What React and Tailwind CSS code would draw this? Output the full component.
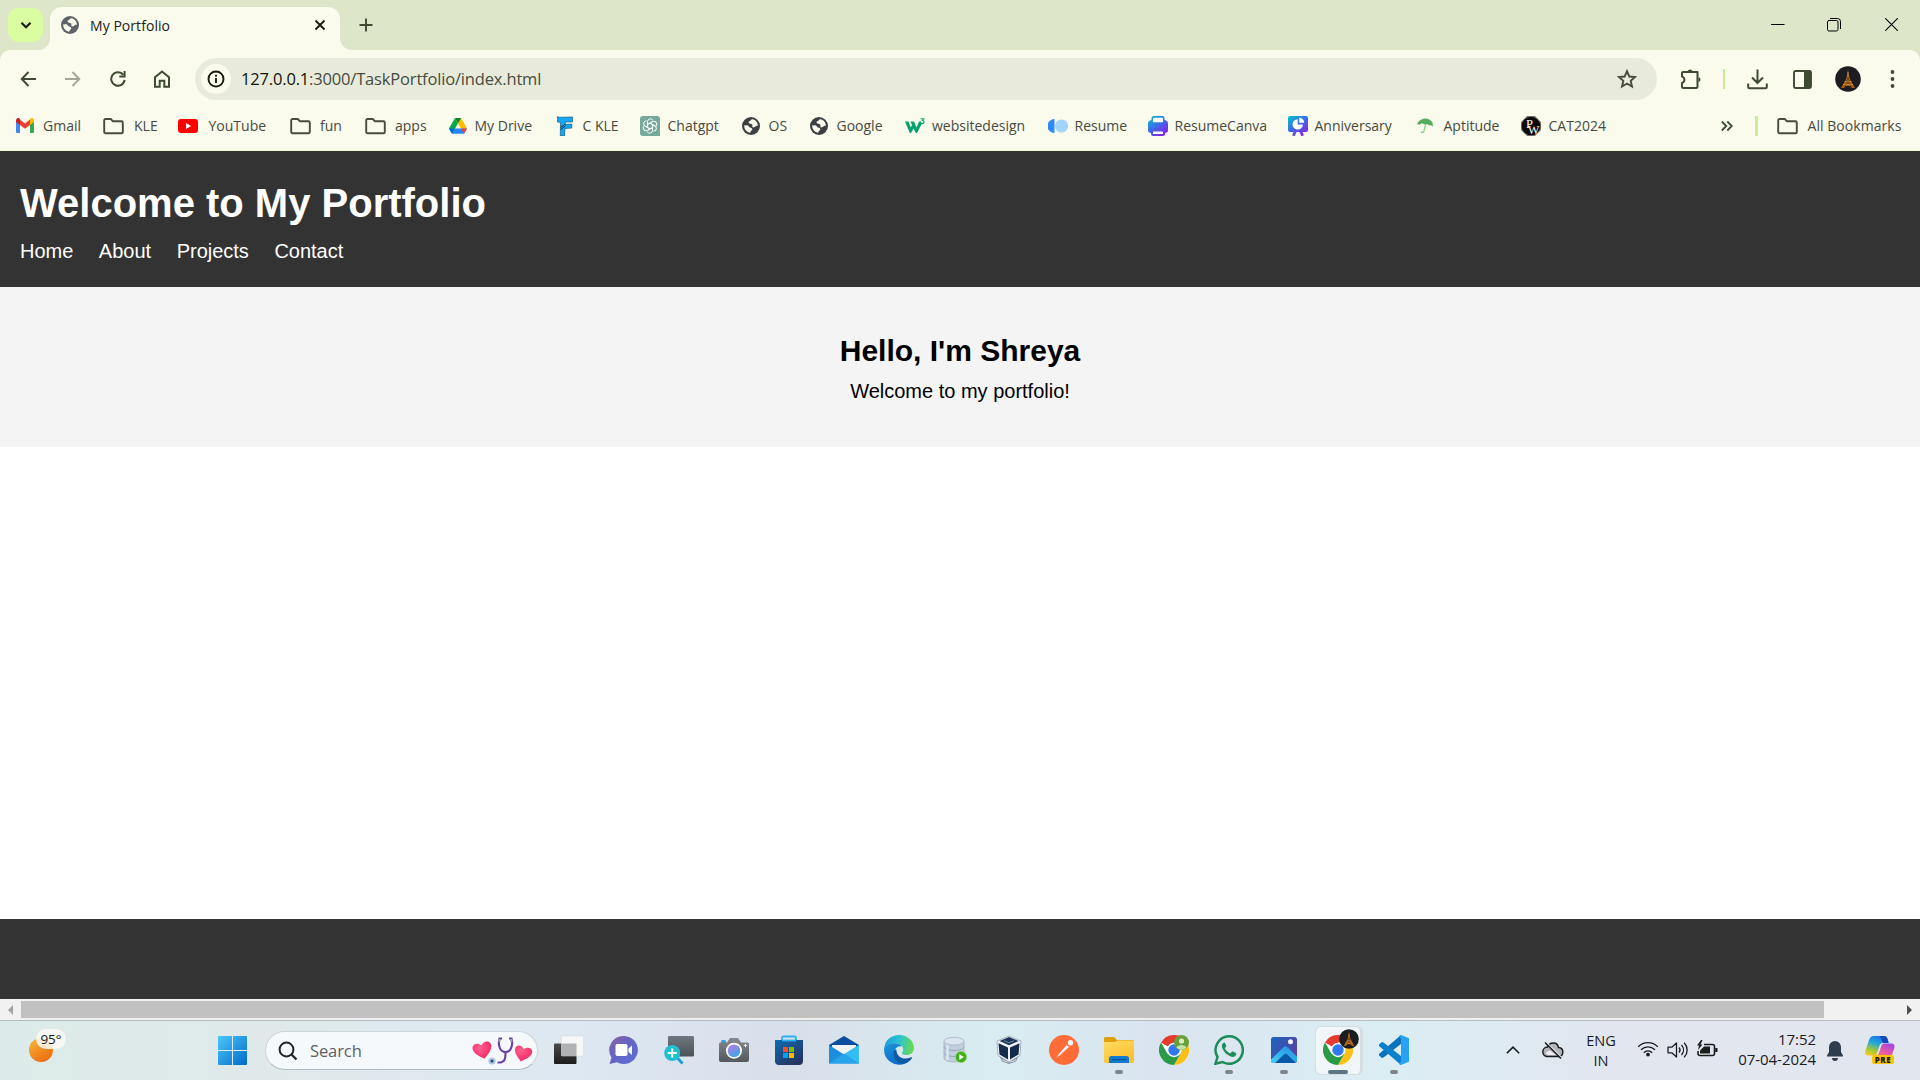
import React from "react";

const Globe = ({ color }) => (
  <svg className="h-[18px] w-[18px]" viewBox="0 0 18 18">
    <circle cx="9" cy="9" r="9" fill={color} />
    <path
      d="M10.300 2.200c-1.600.1-1.300 1.800-2.900 2C5.900 4.500 6.600 6 7.400 6.500c1 .6 2.600.2 3 1.300.3.900-.4 1.400 0 2.200.6 1 2.600.3 3.200-.7.5-.8 1.300-.7 2.200-.3.3-3.200-2-6.300-5.500-6.800zM2.300 8.300c-.4 3.600 2 6.700 5.600 7.500 1-.3.3-1.600 1.300-2.100 1-.5 1.500-1.300.8-2.200-.6-.8-1.800-.5-2.600-1.200-.9-.9-.8-1.900-2.100-2-1.100-.1-2 .4-3 0z"
      fill="#fafaed"
    />
  </svg>
);

const Folder = () => (
  <svg className="h-5 w-[21px]" viewBox="0 0 21 20">
    <path
      d="M1.200 4.300a1.300 1.300 0 0 1 1.300-1.300h5.300l2.200 2.300h8.400a1.400 1.400 0 0 1 1.400 1.400v9.200a1.300 1.300 0 0 1-1.300 1.300H2.500a1.300 1.300 0 0 1-1.300-1.300z"
      fill="none"
      stroke="#474c3f"
      strokeWidth="1.9"
    />
  </svg>
);

const Gmail = () => (
  <svg className="h-[15px] w-[18px]" viewBox="0 0 18 15">
    <path d="M0 3v10.700C0 14.400.6 15 1.300 15H4V6z" fill="#4285f4" />
    <path d="M18 3v10.700c0 .7-.6 1.300-1.300 1.300H14V6z" fill="#34a853" />
    <path d="M14 1.600V7l4-3V2.400C18 .3 15.700-.7 14.300.5z" fill="#fbbc04" />
    <path d="M4 7V1.600l5 3.800 5-3.800V7l-5 3.800z" fill="#ea4335" />
    <path d="M0 2.400V4l4 3V1.600L3.700.5C2.300-.7 0 .3 0 2.400z" fill="#c5221f" />
  </svg>
);

const YouTube = () => (
  <svg className="h-[14px] w-5" viewBox="0 0 20 14">
    <rect width="20" height="14" rx="3" fill="#f00" />
    <path d="M8 4l5.200 3L8 10z" fill="#fff" />
  </svg>
);

const Drive = () => (
  <svg className="h-4 w-[18px]" viewBox="0 0 18 16">
    <path d="M6 0L0 10.500 3 15.800 9 5.300z" fill="#00ac47" />
    <path d="M6 0h6l6 10.500h-6z" fill="#ffba00" />
    <path d="M6 0h6L9 5.300z" fill="#00832d" />
    <path d="M6 10.500h12l-3 5.300H3z" fill="#2684fc" />
    <path d="M12 10.500h6l-3 5.300z" fill="#ea4335" />
    <path d="M0 10.500h6l-3 5.300z" fill="#0066da" />
  </svg>
);

const BlueF = () => (
  <svg className="h-5 w-4" viewBox="0 0 16 20">
    <path d="M.5.500l2 .8 13-.3v5L8.300 6l-.2 2.300 6.700-.2v4L8 12.500 7.500 20H3.300L3.500 6.500.5 6z" fill="#12a8f5" stroke="#0e4f77" strokeWidth=".6" />
    <path d="M3.500 11.500l5-3.500M3.500 13.500l5-3.500" stroke="#12334a" strokeWidth="1" />
  </svg>
);

const ChatGpt = () => (
  <svg className="h-5 w-5" viewBox="0 0 20 20">
    <path d="M3 0h14a3 3 0 0 1 3 3v17H3a3 3 0 0 1-3-3V3a3 3 0 0 1 3-3z" fill="#74a99b" />
    <g fill="none" stroke="#fff" strokeWidth="1">
      {[0, 60, 120, 180, 240, 300].map((a) => (
        <path key={a} transform={`rotate(${a} 10 10)`} d="M7.500 11.400V5.700a2.900 2.900 0 0 1 5.400-1.400M7.500 8.500l4.300-2.500" />
      ))}
    </g>
  </svg>
);

const W3 = () => (
  <svg className="h-4 w-5" viewBox="0 0 20 16">
    <path d="M0 3.500h3.500L5.800 9.500 7 7 5.500 3.500H9l2.500 6L14 3.500h2l.7 2.500-4.700 9h-1.200L8.500 10.500 6 15H4.800z" fill="#04a26d" />
    <path d="M15.700.7h3.100l-1.400 1.800c2.400.2 2 3.100-.2 3.100-.8 0-1.400-.3-1.600-.9" fill="none" stroke="#04a26d" strokeWidth="1.1" />
  </svg>
);

const ResumeDots = () => (
  <svg className="h-[14px] w-5" viewBox="0 0 20 14">
    <path d="M6.500 0v14a7 7 0 0 1 0-14z" fill="#2f8af2" />
    <circle cx="13.500" cy="7" r="6.600" fill="#a3d5fb" />
  </svg>
);

const CanvaGradient = ({ id }) => (
  <linearGradient id={id} x1="0" y1="0" x2=".75" y2="1">
    <stop stopColor="#00c4cc" />
    <stop offset=".5" stopColor="#3a6ee8" />
    <stop offset="1" stopColor="#8b1fe8" />
  </linearGradient>
);

const Printer = () => (
  <svg className="h-5 w-5" viewBox="0 0 20 20">
    <defs><CanvaGradient id="printer" /></defs>
    <path d="M5.500 0h9a2 2 0 0 1 2 2v2A4 4 0 0 1 20 8v6a3 3 0 0 1-3 3v1a2 2 0 0 1-2 2H5a2 2 0 0 1-2-2v-1a3 3 0 0 1-3-3V8a4 4 0 0 1 3.500-4V2a2 2 0 0 1 2-2z" fill="url(#printer)" />
    <rect x="5" y="1.800" width="10" height="4.400" rx=".7" fill="#fff" />
    <rect x="5" y="15.500" width="10" height="2.600" rx=".7" fill="#fff" />
  </svg>
);

const Board = () => (
  <svg className="h-5 w-5" viewBox="0 0 20 20">
    <defs><CanvaGradient id="board" /></defs>
    <path d="M2 0h16a2 2 0 0 1 2 2v12a2 2 0 0 1-2 2h-3.500l1.500 3.500-2.800.5-1.700-4h-3l-1.700 4-2.800-.5L5.500 16H2a2 2 0 0 1-2-2V2a2 2 0 0 1 2-2z" fill="url(#board)" />
    <path d="M9.700 3.200a5.200 5.200 0 1 0 5.200 5.200H9.700z" fill="#fff" />
    <path d="M11.200 1.800v5h5a5 5 0 0 0-5-5z" fill="#fff" />
  </svg>
);

const Umbrella = () => (
  <svg className="h-4 w-[18px]" viewBox="0 0 18 16">
    <path d="M1 6.500C3 .5 12-2.500 16.500 4.500L17 9c-1-1.500-2.500-2-3.700-1.500-1-1.400-2.700-1.700-4-.7C7 5 4.500 5.200 3.800 7 3 6 1.800 5.900 1 6.500z" fill="#58ad5a" />
    <path d="M9.500 6.500L8 13c-.4 2-2.800 2-2.600.2" fill="none" stroke="#8fcf93" strokeWidth="1.3" />
  </svg>
);

const PwLogo = () => (
  <svg className="h-5 w-5" viewBox="0 0 20 20">
    <path d="M6 0h8l6 6v8l-6 6H6l-6-6V6z" fill="#77776f" />
    <circle cx="10" cy="10" r="9.300" fill="#0b0b0b" />
    <text x="5" y="11.500" fontFamily="Liberation Serif, serif" fontSize="12.500" fill="#fff">P</text>
    <text x="7" y="18" fontFamily="Liberation Serif, serif" fontSize="12" fill="#fff">W</text>
  </svg>
);

const darkGlobe = () => <Globe color="#3c4043" />;

const bookmarks = [
  { label: "Gmail", Icon: Gmail, slot: "w-[87px]", gap: "w-[27px]" },
  { label: "KLE", Icon: Folder, slot: "w-[74.500px]", gap: "w-[31px]" },
  { label: "YouTube", Icon: YouTube, slot: "w-[112px]", gap: "w-[31px]" },
  { label: "fun", Icon: Folder, slot: "w-[75px]", gap: "w-[30.500px]" },
  { label: "apps", Icon: Folder, slot: "w-[84px]", gap: "w-[30.500px]" },
  { label: "My Drive", Icon: Drive, slot: "w-[108px]", gap: "w-[26px]" },
  { label: "C KLE", Icon: BlueF, slot: "w-[83.500px]", gap: "w-[26px]" },
  { label: "Chatgpt", Icon: ChatGpt, slot: "w-[101.500px]", gap: "w-[27.500px]" },
  { label: "OS", Icon: darkGlobe, slot: "w-[68px]", gap: "w-[27px]" },
  { label: "Google", Icon: darkGlobe, slot: "w-[95px]", gap: "w-[27px]" },
  { label: "websitedesign", Icon: W3, slot: "w-[143px]", gap: "w-[27.500px]" },
  { label: "Resume", Icon: ResumeDots, slot: "w-[100px]", gap: "w-[27px]" },
  { label: "ResumeCanva", Icon: Printer, slot: "w-[140px]", gap: "w-[27px]" },
  { label: "Anniversary", Icon: Board, slot: "w-[128.500px]", gap: "w-[27px]" },
  { label: "Aptitude", Icon: Umbrella, slot: "w-[104.500px]", gap: "w-[27.500px]" },
  { label: "CAT2024", Icon: PwLogo, slot: "w-[200px]", gap: "w-[28px]" },
];

const EiffelAvatar = ({ className }) => (
  <svg className={className} viewBox="0 0 26 26">
    <circle cx="13" cy="13" r="12.800" fill="#1d1c20" />
    <path d="M13 2.500l.7 6.500 1.800 5.500 4.500 7.500h-3c-1.300-3-6.700-3-8 0H6l4.500-7.500 1.800-5.500z" fill="#a86218" />
    <path d="M13 6v8M9.500 15.500h7M8 18.500h10" stroke="#e29a3a" strokeWidth=".9" />
    <path d="M12 11l2.500 4-5 5M14 11l-2.500 4 5 5" stroke="#4b2c10" strokeWidth=".7" fill="none" />
  </svg>
);

function TabStrip() {
  return (
    <div className="flex h-[50px] items-start bg-[#dee6c9]">
      <div className="ml-2 mt-2 flex h-[34px] w-[35px] items-center justify-center rounded-[11px] bg-[#dbfda2]">
        <svg className="h-3 w-3" viewBox="0 0 12 12">
          <path d="M1.500 3.800L6 8.300l4.500-4.500" fill="none" stroke="#171d10" strokeWidth="2.1" />
        </svg>
      </div>
      <svg className="mt-[38px] ml-[-5px] h-3 w-3" viewBox="0 0 12 12">
        <path d="M12 0v12H0A12 12 0 0 0 12 0z" fill="#fafaed" />
      </svg>
      <div className="mt-[7px] flex h-[43px] w-[290px] items-center rounded-t-[12px] bg-[#fafaed] pb-[7px]">
        <div className="ml-[11px] mt-[-1px]"><Globe color="#5f6368" /></div>
        <span className="ml-[11px] flex-1 whitespace-nowrap text-[14px] tracking-[.05px] text-[#1b1c17]">My Portfolio</span>
        <svg className="mr-[14px] mt-[-1px] h-3 w-3" viewBox="0 0 12 12">
          <path d="M1.500 1.500l9 9M10.500 1.500l-9 9" stroke="#171d10" strokeWidth="1.9" />
        </svg>
      </div>
      <svg className="mt-[38px] h-3 w-3" viewBox="0 0 12 12">
        <path d="M0 0v12h12A12 12 0 0 1 0 0z" fill="#fafaed" />
      </svg>
      <svg className="ml-[7px] mt-[18px] h-[14px] w-[14px]" viewBox="0 0 14 14">
        <path d="M7 .5v13M.5 7h13" stroke="#3f4a33" strokeWidth="1.9" />
      </svg>
      <div className="flex-1" />
      <svg className="mr-[42px] mt-[18px] h-[13px] w-[14px]" viewBox="0 0 14 13">
        <path d="M0 6.500h13.500" stroke="#000" strokeWidth="1" />
      </svg>
      <svg className="mr-[44px] mt-[18px] h-[14px] w-[14px]" viewBox="0 0 14 14">
        <path d="M3 .5h7.500a3 3 0 0 1 3 3V11" fill="none" stroke="#000" strokeWidth="1" />
        <rect x=".5" y="2.500" width="10.500" height="10.500" rx="1.500" fill="none" stroke="#000" strokeWidth="1" />
      </svg>
      <svg className="mr-[22px] mt-[18px] h-[13px] w-[13px]" viewBox="0 0 13 13">
        <path d="M.3.3l12.400 12.400M12.700.3L.3 12.700" stroke="#000" strokeWidth="1.1" />
      </svg>
    </div>
  );
}

function Toolbar() {
  return (
    <div className="bg-[#dee6c9]">
      <div className="flex h-[58px] items-center rounded-t-[10px] bg-[#fafaed]">
        <svg className="ml-[20px] h-4 w-4" viewBox="0 0 16 16">
          <path d="M8.500 1L1.700 8l6.800 7M1.700 8H16" fill="none" stroke="#3f4a33" strokeWidth="1.9" />
        </svg>
        <svg className="ml-[29px] h-4 w-4" viewBox="0 0 16 16">
          <path d="M7.500 1l6.800 7-6.800 7M14.300 8H0" fill="none" stroke="#a3a698" strokeWidth="1.9" />
        </svg>
        <svg className="ml-[29px] h-4 w-4" viewBox="0 0 16 16">
          <path d="M14.600 8.800a6.700 6.700 0 1 1-1.300-4.800" fill="none" stroke="#3f4a33" strokeWidth="2" />
          <path d="M15.600 0v6.500H9.300V4.600h4.300V0z" fill="#3f4a33" />
        </svg>
        <svg className="ml-[27px] h-[18px] w-[18px]" viewBox="0 0 18 18">
          <path d="M2 7.300L9 1.500l7 5.800v9.500h-4.700v-6H6.700v6H2z" fill="none" stroke="#3f4a33" strokeWidth="2" />
        </svg>
        <div className="ml-[24px] flex h-[42px] w-[1462px] items-center rounded-full bg-[#e8ebdb]">
          <div className="ml-[6px] flex h-[30px] w-[30px] items-center justify-center rounded-full bg-[#fafaed]">
            <svg className="h-[18px] w-[18px]" viewBox="0 0 18 18">
              <circle cx="9" cy="9" r="7.500" fill="none" stroke="#171d10" strokeWidth="1.9" />
              <path d="M9 8v5M9 4.700v2" stroke="#171d10" strokeWidth="1.9" />
            </svg>
          </div>
          <span className="ml-[10px] mt-px flex-1 whitespace-nowrap text-[16.500px] tracking-[-.17px] text-[#474b40]">
            <span className="text-[#11140c]">127.0.0.1</span>:3000/TaskPortfolio/index.html
          </span>
          <svg className="mr-[20px] h-5 w-5" viewBox="0 0 20 20">
            <path d="M10 2.200l2.300 5.300 5.700.5-4.300 3.800 1.300 5.700-5-3-5 3 1.300-5.700L2 8l5.700-.5z" fill="none" stroke="#474c3f" strokeWidth="1.9" />
          </svg>
        </div>
        <svg className="ml-[23px] h-[22px] w-[22px]" viewBox="0 0 22 22">
          <path d="M3 4h14.500v14.500a1.500 1.500 0 0 1-1.500 1.500H3.500A1.500 1.500 0 0 1 2 18.500v-3.600c3.200-1 3.200-5.300 0-6.300V5a1 1 0 0 1 1-1z" fill="none" stroke="#3f4a33" strokeWidth="2" strokeLinejoin="round" />
          <path d="M7.500 3.500a2.700 2.700 0 0 1 5.200 0zM18.500 9a2.700 2.700 0 0 1 0 5.200z" fill="#3f4a33" />
        </svg>
        <div className="ml-[21px] h-5 w-[2px] bg-[#c9ed94]" />
        <svg className="ml-[22px] h-[21px] w-[21px]" viewBox="0 0 21 21">
          <path d="M10.500.5v13M5 8.500l5.500 5.500L16 8.500M1.200 14.500v3.300a1.500 1.500 0 0 0 1.500 1.500h15.600a1.500 1.500 0 0 0 1.500-1.500v-3.300" fill="none" stroke="#3f4a33" strokeWidth="2" />
        </svg>
        <svg className="ml-[24.500px] h-[19px] w-[19px]" viewBox="0 0 19 19">
          <rect x="1" y="1" width="17" height="17" rx="1.500" fill="none" stroke="#3f4a33" strokeWidth="1.9" />
          <path d="M11 1h7v17h-7z" fill="#3f4a33" />
        </svg>
        <EiffelAvatar className="ml-[23px] mt-[-1px] h-[26px] w-[26px]" />
        <svg className="ml-[29px] h-5 w-[5px]" viewBox="0 0 5 20">
          <circle cx="2.500" cy="3" r="1.900" fill="#3f4a33" />
          <circle cx="2.500" cy="10" r="1.900" fill="#3f4a33" />
          <circle cx="2.500" cy="17" r="1.900" fill="#3f4a33" />
        </svg>
      </div>
      <div className="flex h-[43px] items-center border-b border-[#eeffd0] bg-[#fafaed] pb-[7px] pl-4 text-[14px] text-[#474b40]">
        {bookmarks.map(({ label, Icon, slot, gap }) => (
          <div key={label} className={"flex shrink-0 items-center whitespace-nowrap " + slot}>
            <div className={"shrink-0 " + gap}><Icon /></div>
            <span>{label}</span>
          </div>
        ))}
        <svg className="h-3 w-3" viewBox="0 0 12 12">
          <path d="M.8 1.500L5.300 6 .8 10.500M6.300 1.500L10.800 6l-4.500 4.500" fill="none" stroke="#3f4a33" strokeWidth="1.8" />
        </svg>
        <div className="ml-[22px] h-5 w-[3px] bg-[#c9ed94]" />
        <div className="ml-[19px]"><Folder /></div>
        <span className="ml-[10px] whitespace-nowrap tracking-[.05px]">All Bookmarks</span>
      </div>
    </div>
  );
}

function Page() {
  return (
    <div className="flex flex-col bg-white font-['Liberation_Sans',Arial,sans-serif]">
      <header className="h-[136px] bg-[#333] px-5 pt-[29px] text-white">
        <h1 className="text-[40px] font-bold leading-[46px]">Welcome to My Portfolio</h1>
        <nav className="mt-[14px] flex gap-[25.500px] text-[20px] leading-[23px]">
          <a>Home</a>
          <a>About</a>
          <a>Projects</a>
          <a>Contact</a>
        </nav>
      </header>
      <section className="h-[160px] bg-[#f4f4f4] pt-[47px] text-center text-black">
        <h2 className="text-[30px] font-bold leading-[34px]">Hello, I'm Shreya</h2>
        <p className="mt-[12px] text-[20px] leading-[23px]">Welcome to my portfolio!</p>
      </section>
      <div className="h-[472px]" />
      <footer className="h-[80px] bg-[#333]" />
      <div className="flex h-[21px] items-center bg-[#f1f1f1]">
        <svg className="ml-2 h-[10px] w-[5px]" viewBox="0 0 5 10"><path d="M5 0v10L0 5z" fill="#a3a3a3" /></svg>
        <div className="ml-2 h-[17px] w-[1803px] bg-[#c1c1c1]" />
        <svg className="ml-[83px] h-[10px] w-[5px]" viewBox="0 0 5 10"><path d="M0 0v10l5-5z" fill="#505050" /></svg>
      </div>
    </div>
  );
}

const TaskView = () => (
  <svg className="h-[30px] w-[30px]" viewBox="0 0 30 30">
    <defs><linearGradient id="tv" x1="0" y1="0" x2="0" y2="1"><stop stopColor="#4a4a4a" /><stop offset="1" stopColor="#1c1c1c" /></linearGradient></defs>
    <rect x="0" y="8.500" width="22.500" height="20.500" rx="1" fill="url(#tv)" />
    <rect x="7.500" y="1" width="22" height="20" rx="1" fill="#f7f7f7" stroke="#d6d9dd" strokeWidth=".5" />
    <rect x="7.500" y="8.500" width="15" height="12.500" fill="#b0b2b3" />
  </svg>
);
const Chat = () => (
  <svg className="h-[30px] w-[30px]" viewBox="0 0 30 30">
    <defs><linearGradient id="chat" x1="0" y1="0" x2="1" y2=".9"><stop stopColor="#8a62a3" /><stop offset=".5" stopColor="#6464c4" /><stop offset="1" stopColor="#5b6fdc" /></linearGradient></defs>
    <path d="M15 1a14 14 0 1 1-7 26.200L.5 29l2-6.500A14 14 0 0 1 15 1z" fill="url(#chat)" />
    <rect x="6.500" y="9" width="12" height="12" rx="1.800" fill="#fff" />
    <path d="M19.500 13.500l3.500-3v9.500l-3.500-3z" fill="#fff" />
  </svg>
);
const ScreenZoom = () => (
  <svg className="h-[30px] w-[30px]" viewBox="0 0 30 30">
    <defs><linearGradient id="sz" x1="0" y1="0" x2="0" y2="1"><stop stopColor="#6f7780" /><stop offset="1" stopColor="#4c5258" /></linearGradient></defs>
    <rect x="4" y="1" width="26" height="20.500" rx="1.300" fill="url(#sz)" />
    <path d="M13 22.500l5.500 6" stroke="#1e9fdc" strokeWidth="3" />
    <circle cx="8.200" cy="18" r="8" fill="#22bfcf" />
    <path d="M8.200 13.500v9M3.700 18h9" stroke="#fff" strokeWidth="1.9" />
  </svg>
);
const Camera = () => (
  <svg className="h-[30px] w-[30px]" viewBox="0 0 30 30">
    <defs>
      <linearGradient id="cam" x1="0" y1="0" x2="0" y2="1"><stop stopColor="#868b90" /><stop offset="1" stopColor="#53585d" /></linearGradient>
      <linearGradient id="lens" x1="0" y1="0" x2=".6" y2="1"><stop stopColor="#c678dd" /><stop offset="1" stopColor="#3aa5ec" /></linearGradient>
    </defs>
    <rect x="2" y="5" width="5" height="4" rx="1.500" fill="#2e9fe0" />
    <path d="M1.500 7.500H8l3-4.500h8l3 4.500h6.500A1.500 1.500 0 0 1 30 9v16a2 2 0 0 1-2 2H2a2 2 0 0 1-2-2V9a1.500 1.500 0 0 1 1.500-1.500z" fill="url(#cam)" />
    <circle cx="15" cy="15.700" r="8" fill="#fff" />
    <circle cx="15" cy="15.700" r="6.300" fill="url(#lens)" />
    <path d="M26.500 8.800v3.400M24.800 10.500h3.400" stroke="#e7e9eb" strokeWidth="1.1" />
  </svg>
);
const Store = () => (
  <svg className="h-[30px] w-[30px]" viewBox="0 0 30 30">
    <defs><linearGradient id="store" x1="0" y1="0" x2=".7" y2="1"><stop stopColor="#0e6bb5" /><stop offset="1" stopColor="#26345f" /></linearGradient></defs>
    <path d="M8 8V3a1.500 1.500 0 0 1 1.500-1.500h11A1.500 1.500 0 0 1 22 3v5" fill="none" stroke="#29b4f0" strokeWidth="1.8" />
    <path d="M1 5h28v21a4 4 0 0 1-4 4H5a4 4 0 0 1-4-4z" fill="url(#store)" />
    <path d="M8 5.500h14" stroke="#29b4f0" strokeWidth="1.8" />
    <rect x="9" y="12" width="5" height="5" fill="#f25022" /><rect x="15" y="12" width="5" height="5" fill="#7fba00" />
    <rect x="9" y="18" width="5" height="5" fill="#00a4ef" /><rect x="15" y="18" width="5" height="5" fill="#ffb900" />
  </svg>
);
const Mail = () => (
  <svg className="h-[30px] w-[30px]" viewBox="0 0 30 30">
    <path d="M0 10L15 1l15 9v5H0z" fill="#0b4f9c" />
    <path d="M3 10h24v9H3z" fill="#f1f2f4" />
    <path d="M0 10l15 9.500L30 10v18.500H0z" fill="#1c8fdc" />
    <path d="M30 10v18.500L15 19.300z" fill="#35bdf2" />
    <path d="M0 28.500l15-10 15 10z" fill="#28a4ea" />
  </svg>
);
const Edge = () => (
  <svg className="h-[30px] w-[30px]" viewBox="0 0 30 30">
    <defs>
      <linearGradient id="e1" x1="0" y1=".3" x2="1" y2=".4"><stop stopColor="#1f9be0" /><stop offset=".5" stopColor="#2bc3d2" /><stop offset="1" stopColor="#6cd94c" /></linearGradient>
      <linearGradient id="e2" x1="0" y1="0" x2=".5" y2="1"><stop stopColor="#1c94dc" /><stop offset="1" stopColor="#0d6cc4" /></linearGradient>
    </defs>
    <path d="M.2 13C1 5 7.500 0 15 0c9 0 15 6.500 15 13 0 5-4 7-7.500 7-3 0-4.500-1-4.500-2 0-.8 1.200-1.300 1.200-3.500C19.200 11 15.500 8.300 11 8.300 5.500 8.300 1.500 10.500.2 13z" fill="url(#e1)" />
    <path d="M.2 13C1.500 10 5.500 8.300 11 8.300c3 0 5.500 1.200 7 3-5-1-7.500 2.700-7.500 6.700 0 5 4 11 11.500 10A15 15 0 0 1 .2 13z" fill="url(#e2)" />
    <path d="M10 16c-2 7 4 14.500 12 12.200 2.600-1.100 4.500-2.800 6-5.200.4-.7-.2-1-.8-.7C20 25.500 12.500 22.500 12.300 14.500 11.200 14.800 10.300 15.200 10 16z" fill="#0c59a4" />
  </svg>
);
const Database = () => (
  <svg className="h-[30px] w-[30px]" viewBox="0 0 30 30">
    <path d="M5 6v17c0 2.500 4.500 4 10 4s10-1.500 10-4V6z" fill="#c0cedd" stroke="#93a6bb" strokeWidth=".6" />
    <path d="M5 11.500c0 2.500 4.500 4 10 4s10-1.500 10-4M5 17.500c0 2.500 4.500 4 10 4s10-1.500 10-4" fill="none" stroke="#8fa5bd" strokeWidth=".9" />
    <ellipse cx="15" cy="6.200" rx="10" ry="3.900" fill="#dbe5ef" stroke="#9db0c4" strokeWidth=".7" />
    <path d="M8.500 10v15" stroke="#e4ecf4" strokeWidth="2" />
    <circle cx="22" cy="22" r="5.700" fill="#3fae1a" stroke="#a4dd84" strokeWidth=".8" />
    <path d="M20.300 19l4.500 3-4.500 3z" fill="#fff" />
  </svg>
);
const VBox = () => (
  <svg className="h-[30px] w-[30px]" viewBox="0 0 30 30">
    <path d="M5 20l3 6.500 7 2.500 7-2.500 3-6.500z" fill="#8d97a8" />
    <path d="M8 24.500c3 3 11 3 14 0" fill="none" stroke="#dfe4ea" strokeWidth="1" />
    <path d="M15 1L3 6l1 14.500 11 6.500 11-6.500L27 6z" fill="#eef1f5" stroke="#7f8da1" strokeWidth=".6" />
    <path d="M15 2L5.500 6 15 10.300 24.500 6z" fill="#1e3557" />
    <path d="M4.500 8.300L14 12.600v12L5.500 19.500zM25.500 8.300L16 12.600v12l8.500-5.100z" fill="#152b4c" />
    <path d="M10 5.700l5 2 5-2" fill="none" stroke="#6c87aa" strokeWidth="1" />
  </svg>
);
const Postman = () => (
  <svg className="h-[30px] w-[30px]" viewBox="0 0 30 30">
    <circle cx="15" cy="15" r="15" fill="#ff6c37" />
    <path d="M17.500 10.200l3 1.700-8 7.200-5.200 3.600 3.300-4.500z" fill="#fff" />
    <circle cx="21.500" cy="7.800" r="2.700" fill="#fff" />
    <path d="M12.700 18.500l8.500-7.300" stroke="#ff6c37" strokeWidth=".7" />
  </svg>
);
const Explorer = () => (
  <svg className="h-[30px] w-[30px]" viewBox="0 0 30 30">
    <defs><linearGradient id="ex" x1="0" y1="0" x2=".6" y2="1"><stop stopColor="#ffdc65" /><stop offset="1" stopColor="#fdc02f" /></linearGradient></defs>
    <path d="M0 9V3.500A1.500 1.500 0 0 1 1.500 2H10l3 3h15.500A1.500 1.500 0 0 1 30 6.500V9z" fill="#dfa00b" />
    <path d="M0 7h11l2.500-1.500H30v21A1.500 1.500 0 0 1 28.500 28h-27A1.500 1.500 0 0 1 0 26.500z" fill="url(#ex)" />
    <path d="M5 28v-4.500A2.500 2.500 0 0 1 7.500 21h15a2.500 2.500 0 0 1 2.500 2.500V28z" fill="#0f7bcf" />
    <path d="M8 24.700h14" stroke="#0a4e92" strokeWidth="1" />
  </svg>
);
const ChromeArt = () => (
  <>
    <circle cx="15" cy="15" r="15" fill="#fff" />
    <path d="M15 15L2 7.500A15 15 0 0 1 28 7.500H15z" fill="#e33b2e" />
    <path d="M21.500 18.700L15 30A15 15 0 0 0 28 7.500H15a7.500 7.500 0 0 1 6.500 11.200z" fill="#fbc116" />
    <path d="M8.500 18.700L2 7.500A15 15 0 0 0 15 30l6.500-11.300z" fill="#2a9a47" />
    <circle cx="15" cy="15" r="7.200" fill="#fff" />
    <circle cx="15" cy="15" r="5.700" fill="#2f78ee" />
  </>
);
const ChromeGuest = () => (
  <svg className="h-[30px] w-[30px]" viewBox="0 0 30 30">
    <ChromeArt />
    <circle cx="22.500" cy="7.500" r="7.500" fill="#689f38" />
    <circle cx="22.500" cy="6" r="2.600" fill="#dcedc8" />
    <path d="M17.500 12.500c1-3.500 9-3.500 10 0-2.500 3-7.500 3-10 0z" fill="#c5e1a5" />
  </svg>
);
const WhatsApp = () => (
  <svg className="h-[30px] w-[30px]" viewBox="0 0 30 30">
    <path d="M15 1.300A13.700 13.700 0 1 1 8.500 27l-7 1.700 2-6.700A13.700 13.700 0 0 1 15 1.300z" fill="none" stroke="#1e8b5b" strokeWidth="2.5" />
    <path d="M10.200 7.500c-1.800.5-2.700 2.500-2.200 4.500 1.300 4.600 5 8.500 9.800 9.800 2 .5 4.300-.7 4.500-2.800 0-.5-.1-.7-.5-1l-2.900-1.500c-.5-.2-.8-.1-1.100.3l-1 1.200c-.3.300-.6.300-1 .2-2-.9-3.600-2.400-4.700-4.400-.2-.4-.1-.7.1-1l.9-1.200c.2-.3.2-.6.1-1L11 8c-.2-.4-.4-.6-.8-.5z" fill="#1e8b5b" />
  </svg>
);
const Photos = () => (
  <svg className="h-[30px] w-[30px]" viewBox="0 0 30 30">
    <defs>
      <linearGradient id="ph" x1="0" y1="0" x2="1" y2=".7"><stop stopColor="#1a66be" /><stop offset="1" stopColor="#5a3fa0" /></linearGradient>
      <linearGradient id="mt" x1="0" y1="1" x2="1" y2="0"><stop stopColor="#48d0f5" /><stop offset="1" stopColor="#1d8de2" /></linearGradient>
      <clipPath id="phc"><rect x="2" y="2" width="26" height="26" rx="2.500" /></clipPath>
    </defs>
    <g clipPath="url(#phc)">
      <rect x="2" y="2" width="26" height="26" fill="url(#ph)" />
      <path d="M2 24.500L14.500 12.200a3 3 0 0 1 4 0L28 21.500V28H2z" fill="url(#mt)" />
      <path d="M6 28l8.700-8.300a3 3 0 0 1 4 0L27 28z" fill="#0b57a8" />
    </g>
    <circle cx="21.500" cy="6.700" r="2.500" fill="#f4f1fb" />
  </svg>
);
const ChromeActive = () => (
  <div className="relative h-[30px] w-[30px]">
    <svg className="h-[30px] w-[30px]" viewBox="0 0 30 30"><ChromeArt /></svg>
    <EiffelAvatar className="absolute left-[16px] top-[-6px] h-[20px] w-[20px]" />
  </div>
);
const VsCode = () => (
  <svg className="h-[30px] w-[30px]" viewBox="0 0 30 30">
    <path d="M22 0v9L4.500 22.500 3 23 0 20.500v-1.500z" fill="#0a72ba" />
    <path d="M22 30v-9L4.500 7.500 3 7 0 9.500V11z" fill="#0c80cc" />
    <path d="M22 0l8 3.300v23.400L22 30c-.6 0-1.300-.3-1.700-.8L22 26V4L20.300.8C20.700.3 21.400 0 22 0z" fill="#29a3f0" />
  </svg>
);

const apps = [
  { name: "task-view", Icon: TaskView },
  { name: "chat", Icon: Chat },
  { name: "screen-zoom", Icon: ScreenZoom },
  { name: "camera", Icon: Camera },
  { name: "store", Icon: Store },
  { name: "mail", Icon: Mail },
  { name: "edge", Icon: Edge },
  { name: "database", Icon: Database },
  { name: "vbox", Icon: VBox },
  { name: "postman", Icon: Postman },
  { name: "explorer", Icon: Explorer, bar: "w-2 bg-[#7f8689]" },
  { name: "chrome-guest", Icon: ChromeGuest },
  { name: "whatsapp", Icon: WhatsApp, bar: "w-2 bg-[#7f8689]" },
  { name: "photos", Icon: Photos, bar: "w-2 bg-[#7f8689]" },
  { name: "chrome", Icon: ChromeActive, bar: "w-5 bg-[#5d7584]", active: true },
  { name: "vscode", Icon: VsCode, bar: "w-2 bg-[#7f8689]" },
];

const heartPath = "M10 18C4 13.500.5 10 .5 6 .5 1 7 0 10 4.500 13 0 19.500 1 19.500 6c0 4-3.500 7.500-9.500 12z";

function Taskbar() {
  return (
    <div className="flex h-[60px] items-start border-t border-[#b3bbbf] bg-[linear-gradient(90deg,#dcebe9_0%,#e0e9ea_14%,#dde8f2_30%,#d9dfea_41%,#d8edf1_52%,#dae4f0_60%,#dbeef3_72%,#e2e6ef_84%,#e2e6ef_100%)]">
      <div className="relative ml-[28px] mt-[8px] h-[36px] w-[40px]">
        <svg className="absolute left-[1px] top-[9px] h-6 w-6" viewBox="0 0 24 24">
          <defs><linearGradient id="sun" x1=".1" y1="0" x2=".7" y2="1"><stop stopColor="#f3b83a" /><stop offset="1" stopColor="#f06a10" /></linearGradient></defs>
          <circle cx="12" cy="12" r="12" fill="url(#sun)" />
        </svg>
        <div className="absolute left-[8px] top-0 flex h-5 w-[30px] items-center justify-center rounded-full bg-[#fbf9f5]/85 pt-px text-[13.500px] text-[#16181a]">95°</div>
      </div>
      <svg className="ml-[150px] mt-[15px] h-[29px] w-[29px]" viewBox="0 0 29 29">
        <defs><linearGradient id="win" x1="0" y1="0" x2="1" y2="1"><stop stopColor="#4cc8fb" /><stop offset="1" stopColor="#0269c8" /></linearGradient></defs>
        <path d="M1 0h13v14H0V1a1 1 0 0 1 1-1zM15 0h13a1 1 0 0 1 1 1v13H15zM0 15h14v14H1a1 1 0 0 1-1-1zM15 15h14v13a1 1 0 0 1-1 1H15z" fill="url(#win)" />
      </svg>
      <div className="ml-[18px] mt-[10px] flex h-[39px] w-[273px] items-center rounded-full border border-[#cbd5dc] border-b-[#aebbc4] bg-[#f6f9fb]">
        <svg className="ml-[12px] h-5 w-5" viewBox="0 0 20 20">
          <circle cx="8.500" cy="8.500" r="6.900" fill="none" stroke="#222628" strokeWidth="2" />
          <path d="M13.500 13.500L18.500 18.500" stroke="#222628" strokeWidth="2.300" />
        </svg>
        <span className="ml-[12px] mt-px flex-1 text-[16.500px] tracking-[-.1px] text-[#5c6063]">Search</span>
        <svg className="mr-[4px] h-[30px] w-[62px]" viewBox="0 0 62 30">
          <defs><radialGradient id="heart" cx=".35" cy=".3" r=".8"><stop stopColor="#ff5f8f" /><stop offset="1" stopColor="#f5225f" /></radialGradient></defs>
          <g transform="translate(1.500 5) rotate(-12 10 9)"><path d={heartPath} fill="url(#heart)" /></g>
          <g transform="translate(42.500 9) rotate(14 9 9) scale(.92)"><path d={heartPath} fill="url(#heart)" /></g>
          <path d="M31 2.500h-2.500C27 7 28 16 34.500 16S42 7 40.500 2.500H38M34.500 16c0 6 0 11-8 10.500" fill="none" stroke="#6a3fa8" strokeWidth="2.1" />
          <circle cx="21" cy="25" r="3.600" fill="#a9c8ea" /><circle cx="21" cy="25" r="1.500" fill="#34495f" />
          <path d="M28.500 3v3M40.300 3v3" stroke="#9a9db0" strokeWidth="2.200" />
        </svg>
      </div>
      <div className="ml-[3px] flex">
        {apps.map(({ name, Icon, bar, active }) => (
          <div key={name} className="flex w-[55px] flex-col items-center">
            <div className={"relative mt-[5px] flex h-[49px] flex-col items-center " + (active ? "w-12 rounded-[6px] border border-[#d3dde2] border-r-[3px] bg-[#f1f6f9] pt-[8px]" : "w-12 pt-[9px]")}>
              <Icon />
              {bar && <div className={"mt-[5px] h-1 rounded-full " + bar} />}
            </div>
          </div>
        ))}
      </div>
      <svg className="ml-[85px] mt-[25px] h-2 w-[14px]" viewBox="0 0 14 8">
        <path d="M.8 7.300L7 1.200l6.200 6.100" fill="none" stroke="#1a1c1e" strokeWidth="1.6" />
      </svg>
      <svg className="ml-[22px] mt-[20px] h-[18px] w-[22px]" viewBox="0 0 22 18">
        <path d="M5.500 15.500a4.700 4.700 0 0 1 0-9.400C7.500.5 15.500.5 16.500 6.500c6 .5 5.500 9 0 9z" fill="#b3b5b9" stroke="#1a1c1e" strokeWidth="1.5" />
        <path d="M4 12.500c1-3 4-3.500 6-1.500l4 3H5.500z" fill="#eceef2" />
        <path d="M3.700.800l16 16" stroke="#e2e6ef" strokeWidth="1.500" />
        <path d="M3 1.500l16 16" stroke="#1a1c1e" strokeWidth="1.5" />
      </svg>
      <div className="ml-[17px] mt-[10px] w-[40px] text-center text-[14.500px] leading-5 text-[#1a1c1e]">
        <div>ENG</div>
        <div>IN</div>
      </div>
      <svg className="ml-[16px] mt-[20px] h-4 w-[22px]" viewBox="0 0 22 16">
        <path d="M1.200 5.800c5.500-5.600 14.100-5.600 19.600 0M4 8.800c4-4 10-4 14 0M6.800 11.700c2.400-2.400 6-2.400 8.400 0" fill="none" stroke="#1a1c1e" strokeWidth="1.3" />
        <circle cx="11" cy="13.600" r="1.900" fill="#1a1c1e" />
      </svg>
      <svg className="ml-[8px] mt-[20px] h-[18px] w-[22px]" viewBox="0 0 22 18">
        <path d="M1 6.200h3.800L9.500 2v14l-4.700-4.200H1z" fill="none" stroke="#1a1c1e" strokeWidth="1.3" strokeLinejoin="round" />
        <path d="M12 6.500c1.300 1.500 1.300 3.500 0 5M14.500 4c2.700 3 2.700 7 0 10M17.200 1.800c4 4.200 4 10.200 0 14.400" fill="none" stroke="#1a1c1e" strokeWidth="1.3" />
      </svg>
      <svg className="ml-[7px] mt-[19px] h-[18px] w-[22px]" viewBox="0 0 22 18">
        <path d="M8 4.500h8.500A2 2 0 0 1 18.500 6.500v7a2 2 0 0 1-2 2h-12.500A2 2 0 0 1 2 13.500v-2.500" fill="none" stroke="#1a1c1e" strokeWidth="1.6" />
        <path d="M8 6.500h6v7H4v-3z" fill="#1a1c1e" />
        <path d="M19.200 8h2.300v4h-2.300zM5 0L1 5.500h2L2 10l4.500-5.500h-2L6.500 0z" fill="#1a1c1e" />
      </svg>
      <div className="mt-[8px] w-[98px] text-right text-[15px] leading-5 tracking-[-.05px] text-[#1a1c1e]">
        <div>17:52</div>
        <div>07-04-2024</div>
      </div>
      <svg className="ml-[11px] mt-[20px] h-5 w-4" viewBox="0 0 16 20">
        <path d="M8 0a6 6 0 0 1 6 6v5l2 3.500v1H0v-1L2 11V6a6 6 0 0 1 6-6zM5 17h6a3 3 0 0 1-6 0z" fill="#303d4c" />
      </svg>
      <div className="relative ml-[22px] mt-[15px] h-[30px] w-[31px]">
        <svg className="h-[30px] w-[30px]" viewBox="0 0 30 30">
          <defs>
            <linearGradient id="c1" x1=".7" y1="0" x2=".3" y2="1"><stop stopColor="#1f6fe0" /><stop offset=".4" stopColor="#20a5e0" /><stop offset=".75" stopColor="#9cc83c" /><stop offset="1" stopColor="#f1c81c" /></linearGradient>
            <linearGradient id="c2" x1=".8" y1="0" x2=".3" y2="1"><stop stopColor="#a345e8" /><stop offset=".55" stopColor="#ee5a9d" /><stop offset="1" stopColor="#fb8a4c" /></linearGradient>
          </defs>
          <path d="M15 0h4c2 0 3 1.500 3.500 3l1.200 4H18c-2 0-3 1-3.600 3l-2 6.500c-.6 2-1.500 3-3.400 3H3.500c-3 0-3.900-2.500-3-5L4 4C5 1.500 6 0 9 0z" fill="url(#c1)" />
          <path d="M15 0h4c2 0 3 1.500 3.500 3l1.200 4H18z" fill="#1747c0" />
          <path d="M23 7.500h3.500c3 0 3.500 2.500 2.700 5L26.500 20c-.8 2.500-2 4.500-5 4.500h-9c-2 0-3-1.500-3.500-3l-.5-2h2c2 0 3-1 3.600-3l2-6c.6-2 1.500-3 3.400-3z" fill="url(#c2)" />
        </svg>
        <div className="absolute left-[7px] top-[19px] flex h-[9px] w-[22px] items-center justify-center rounded-[2px] bg-[#fcc404] text-[8px] font-extrabold tracking-[.5px] text-[#1c1a10]">PRE</div>
      </div>
    </div>
  );
}

export default function App() {
  return (
    <div className="flex h-[1080px] w-[1920px] flex-col overflow-hidden font-['Open_Sans','Noto_Sans',sans-serif]">
      <TabStrip />
      <Toolbar />
      <Page />
      <Taskbar />
    </div>
  );
}
